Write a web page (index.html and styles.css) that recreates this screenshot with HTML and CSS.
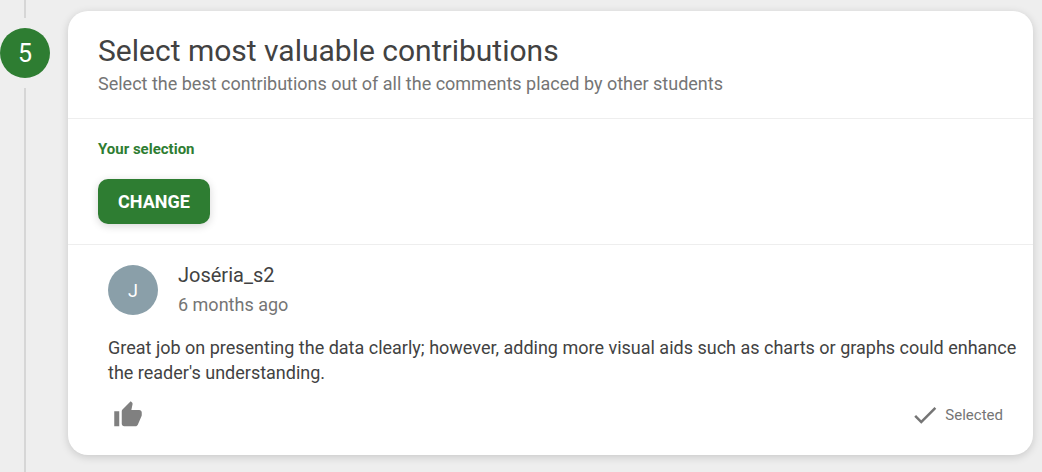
FILE: index.html
```html
<!DOCTYPE html>
<html lang="en">
<head>
  <meta charset="UTF-8">
  <meta name="viewport" content="width=device-width, initial-scale=1.0">
  <title>Select most valuable contributions</title>
  <link rel="stylesheet" href="styles.css">
</head>
<body>
  <main class="step">
    <div class="step-rail">
      <div class="rail-line rail-line-top"></div>
      <div class="step-number">5</div>
      <div class="rail-line rail-line-bottom"></div>
    </div>
    <section class="card">
      <header class="card-header">
        <h1>Select most valuable contributions</h1>
        <p>Select the best contributions out of all the comments placed by other students</p>
      </header>
      <div class="selection">
        <h2>Your selection</h2>
        <button type="button" class="change-btn">CHANGE</button>
      </div>
      <article class="comment">
        <div class="author">
          <div class="avatar">J</div>
          <div>
            <div class="author-name">Joséria_s2</div>
            <div class="date">6 months ago</div>
          </div>
        </div>
        <p class="comment-text">Great job on presenting the data clearly; however, adding more visual aids such as charts or graphs could enhance the reader's understanding.</p>
        <footer class="comment-footer">
          <button type="button" class="like-btn" aria-label="Like">
            <svg viewBox="0 0 24 24"><path d="M1 21h4V9H1v12zm22-11c0-1.100-.9-2-2-2h-6.310l.95-4.570.03-.32c0-.41-.17-.79-.44-1.060L14.170 1 7.590 7.590C7.220 7.950 7 8.450 7 9v10c0 1.100.9 2 2 2h9c.83 0 1.540-.5 1.840-1.220l3.020-7.050c.09-.23.14-.47.14-.73v-2z"/></svg>
          </button>
          <div class="selected">
            <svg viewBox="0 0 24 24"><path d="M9 16.170 4.830 12l-1.420 1.410L9 19 21 7l-1.410-1.410z"/></svg>
            <span>Selected</span>
          </div>
        </footer>
      </article>
    </section>
  </main>
</body>
</html>
```
FILE: styles.css
```css
* {
  box-sizing: border-box;
}

body {
  margin: 0;
  background-color: #eee;
  color: #424242;
  font-family: Roboto, sans-serif;
}

h1, h2, p {
  margin: 0;
  font-weight: 400;
}

.step {
  display: flex;
  gap: 18px;
  min-height: 100vh;
  padding-right: 9px;
}

.step-rail {
  display: flex;
  flex-direction: column;
  align-items: center;
  gap: 10px;
  width: 50px;
}

.rail-line {
  width: 2px;
  background-color: #d6d6d6;
}

.rail-line-top {
  height: 18px;
}

.rail-line-bottom {
  flex: 1;
}

.step-number {
  display: flex;
  justify-content: center;
  align-items: center;
  width: 50px;
  height: 50px;
  border-radius: 50%;
  background-color: #2e7d32;
  color: #fff;
  font-size: 25px;
}

.card {
  flex: 1;
  margin: 11px 0 17px;
  border-radius: 20px;
  background-color: #fff;
  box-shadow: 0 2px 8px rgba(0, 0, 0, 0.16);
}

.card-header {
  padding: 20px 30px 22px;
  border-bottom: 1px solid #eee;
}

.card-header h1 {
  font-size: 30px;
  line-height: 40px;
}

.card-header p {
  color: #757575;
  font-size: 18px;
  line-height: 25px;
}

.selection {
  padding: 20px 30px;
  border-bottom: 1px solid #eee;
}

.selection h2 {
  margin-bottom: 20px;
  color: #2e7d32;
  font-size: 15px;
  font-weight: 700;
  line-height: 20px;
}

.change-btn {
  display: block;
  height: 45px;
  padding: 0 20px;
  border: 0;
  border-radius: 10px;
  background-color: #2e7d32;
  box-shadow: 0 2px 8px rgba(0, 0, 0, 0.16);
  color: #fff;
  font: 700 18px Roboto, sans-serif;
  cursor: pointer;
}

.comment {
  padding: 15px 0 20px 40px;
}

.author {
  display: flex;
  align-items: center;
  gap: 20px;
}

.avatar {
  display: flex;
  justify-content: center;
  align-items: center;
  width: 50px;
  height: 50px;
  border-radius: 50%;
  background-color: #8a9fa9;
  color: #fff;
  font-size: 18px;
}

.author-name {
  font-size: 20px;
  line-height: 30px;
}

.date {
  color: #757575;
  font-size: 18px;
  line-height: 30px;
}

.comment-text {
  margin: 15px 0;
  padding-right: 15px;
  font-size: 18px;
  line-height: 25px;
}

.comment-footer {
  display: flex;
  justify-content: space-between;
  align-items: center;
  padding-right: 30px;
}

.like-btn {
  padding: 0 5px;
  border: 0;
  background: none;
  cursor: pointer;
}

.like-btn svg {
  display: block;
  width: 30px;
  height: 30px;
  fill: #808080;
}

.selected {
  display: flex;
  align-items: center;
  gap: 5px;
  color: #757575;
  font-size: 15px;
}

.selected svg {
  width: 30px;
  height: 30px;
  fill: #757575;
}
```
